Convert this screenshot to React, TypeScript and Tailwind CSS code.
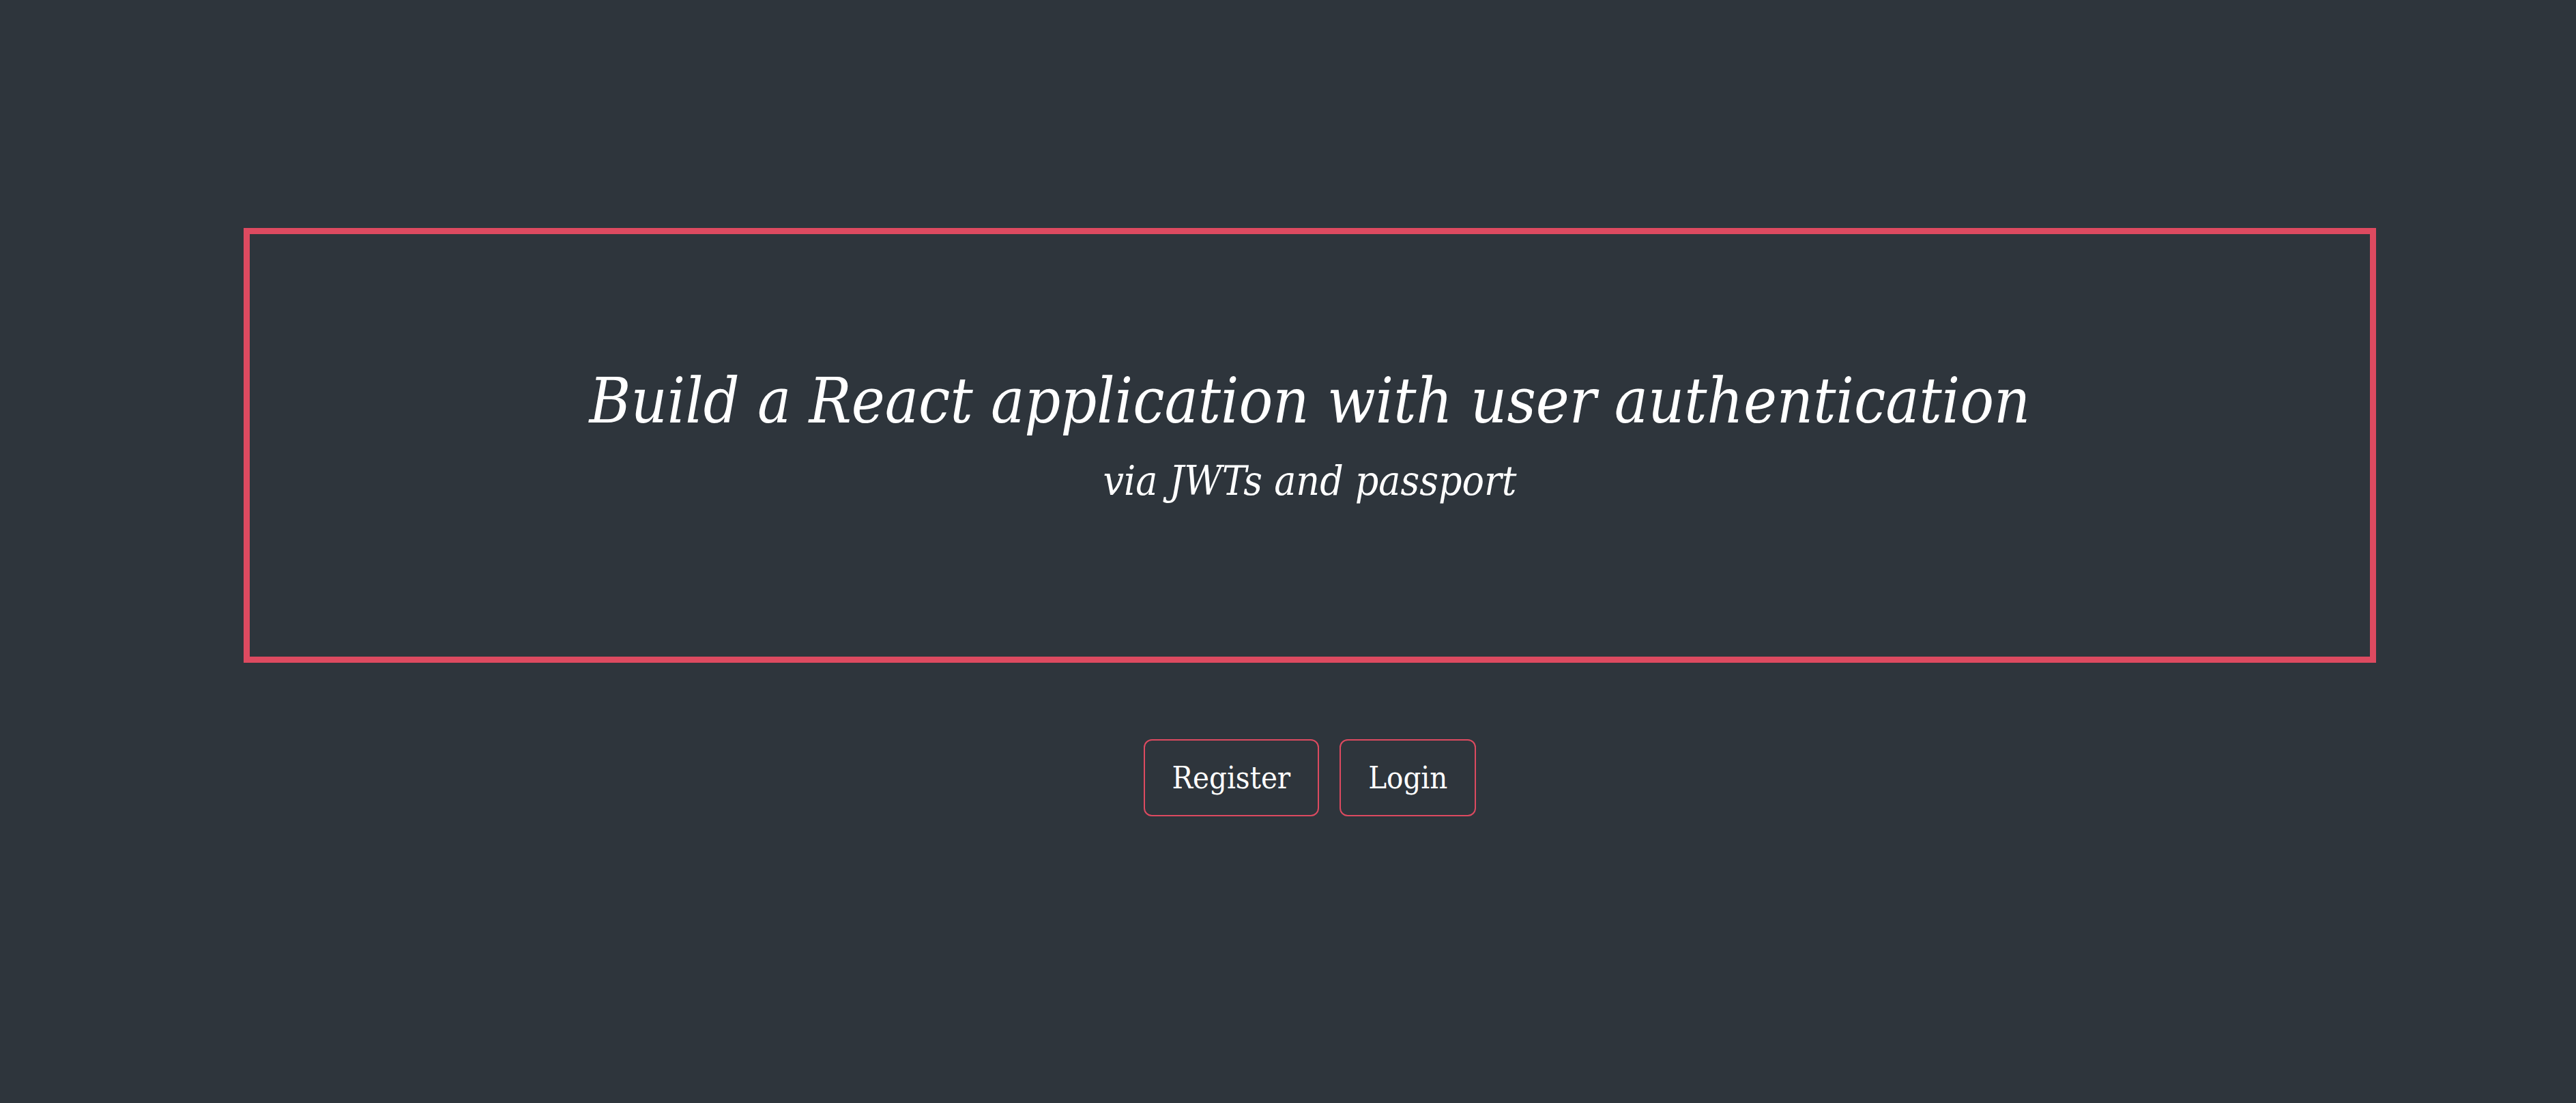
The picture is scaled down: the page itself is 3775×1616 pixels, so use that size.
export default function App() {
    return (
        <div className="min-h-screen w-full bg-[#2e353c] pt-[334px] font-['DejaVu_Serif_Condensed','DejaVu_Serif',serif] text-white">
            <div className="ml-[357px] w-[3125px]">
                <header className="h-[637px] border-[9px] border-[#dd4a60] pt-[199px] text-center italic">
                    <h1 className="text-[92px] leading-none">Build a React application with user authentication</h1>
                    <p className="mt-[40px] text-[60px] leading-none">via JWTs and passport</p>
                </header>
                <div className="mt-[112px] flex justify-center gap-[30px]">
                    <button className="h-[113px] rounded-[12px] border-2 border-[#dd4a60] px-[40px] text-[45px] leading-none">
                        Register
                    </button>
                    <button className="h-[113px] rounded-[12px] border-2 border-[#dd4a60] px-[40px] text-[45px] leading-none">
                        Login
                    </button>
                </div>
            </div>
        </div>
    )
}
